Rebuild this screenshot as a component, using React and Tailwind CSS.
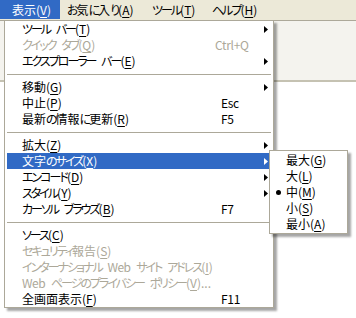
import React from "react";

const main = [
  { t: "ツール バー", k: "T", arrow: true },
  { t: "クイック タブ", k: "Q", sc: "Ctrl+Q", dis: true, scShift: true },
  { t: "エクスプローラー バー", k: "E", arrow: true },
  "sep",
  { t: "移動", k: "G", arrow: true },
  { t: "中止", k: "P", sc: "Esc" },
  { t: "最新の情報に更新", k: "R", sc: "F5" },
  "sep",
  { t: "拡大", k: "Z", arrow: true },
  { t: "文字のサイズ", k: "X", arrow: true, hl: true },
  { t: "エンコード", k: "D", arrow: true },
  { t: "スタイル", k: "Y", arrow: true },
  { t: "カーソル ブラウズ", k: "B", sc: "F7" },
  "sep",
  { t: "ソース", k: "C" },
  { t: "セキュリティ報告", k: "S", dis: true },
  { t: "インターナショナル Web サイト アドレス", k: "I", dis: true },
  { t: "Web ページのプライバシー ポリシー", k: "V", dis: true, suffix: "..." },
  { t: "全画面表示", k: "F", sc: "F11" },
];

const sub = [
  { t: "最大", k: "G" },
  { t: "大", k: "L" },
  { t: "中", k: "M", on: true },
  { t: "小", k: "S" },
  { t: "最小", k: "A" },
];

function Runs({ text }) {
  const parts = text.match(/[\u3040-\u30ff]+|[A-Za-z]+| +|[^\u3040-\u30ffA-Za-z ]+/g) || [];
  return parts.map((p, i) => {
    if (/[\u3040-\u30ff]/.test(p))
      return (
        <span key={i} className="tracking-[-2px]">
          {p}
        </span>
      );
    if (/[A-Za-z]/.test(p))
      return (
        <span key={i} className="tracking-[-0.5px]">
          {p}
        </span>
      );
    if (/^ +$/.test(p))
      return (
        <span key={i} className="tracking-[3px]">
          {p}
        </span>
      );
    return <span key={i}>{p}</span>;
  });
}

function Label({ t, k, suffix }) {
  return (
    <span className="whitespace-nowrap">
      <Runs text={t} />(<span className="underline underline-offset-[2px]">{k}</span>){suffix || ""}
    </span>
  );
}

function Arrow({ white }) {
  return (
    <svg width="4" height="7" viewBox="0 0 4 7" className="block">
      <polygon points="0,0 4,3.5 0,7" fill={white ? "#ffffff" : "#000000"} />
    </svg>
  );
}

export default function App() {
  return (
    <div className="relative w-[356px] h-[318px] overflow-hidden bg-white text-[12px] leading-[16px] text-black font-['Noto_Sans_CJK_JP','Noto_Sans',sans-serif] [font-feature-settings:'palt']">
      {/* menu bar */}
      <div className="flex h-[20px] items-center bg-[#ece9d8]">
        <div className="h-[19px] w-[60px] shrink-0 min-w-0 self-start bg-[#316ac5] pl-[12px] text-white leading-[19px]">
          <Label t="表示" k="V" />
        </div>
        <div className="w-[83px] shrink-0 min-w-0 pl-[7px]">
          <Label t="お気に入り" k="A" />
        </div>
        <div className="w-[59px] shrink-0 min-w-0 pl-[9px]">
          <Label t="ツール" k="T" />
        </div>
        <div className="pl-[10px]">
          <Label t="ヘルプ" k="H" />
        </div>
      </div>
      {/* toolbar area behind */}
      <div className="h-[62px] border-t border-[#aca899] bg-[#f4f3ee] border-b-2 border-b-[#c5c2b2]" />

      {/* main dropdown */}
      <div className="absolute left-[4px] top-[20px] w-[270px] border border-[#aca899] bg-white px-[2px] shadow-[3px_3px_2px_rgba(0,0,0,0.35)]">
        {main.map((it, i) =>
          it === "sep" ? (
            <div key={i} className="flex h-[10px] items-center">
              <div className="h-px w-full bg-[#aca899]" />
            </div>
          ) : (
            <div
              key={i}
              className={
                "flex h-[16px] items-center pl-[15px] pr-[3px] " +
                (it.hl ? "bg-[#316ac5] text-white " : "") +
                (it.dis ? "text-[#aca899] " : "")
              }
            >
              <div className="w-[199px] shrink-0 min-w-0">
                <Label t={it.t} k={it.k} suffix={it.suffix} />
              </div>
              <div className={"flex-1 whitespace-nowrap tracking-[-0.3px] " + (it.scShift ? "-ml-[6px]" : "")}>
                {it.sc || ""}
              </div>
              <div className="w-[4px]">{it.arrow ? <Arrow white={it.hl} /> : null}</div>
            </div>
          )
        )}
      </div>

      {/* submenu */}
      <div className="absolute left-[269px] top-[150px] w-[79px] border border-[#aca899] bg-white px-[2px] py-[1px] shadow-[3px_3px_2px_rgba(0,0,0,0.35)]">
        {sub.map((it, i) => (
          <div key={i} className="relative flex h-[16px] items-center pl-[14px]">
            {it.on ? (
              <span className="absolute left-[4px] top-[6px] h-[5px] w-[5px] rounded-full bg-black" />
            ) : null}
            <Label t={it.t} k={it.k} />
          </div>
        ))}
      </div>
    </div>
  );
}
